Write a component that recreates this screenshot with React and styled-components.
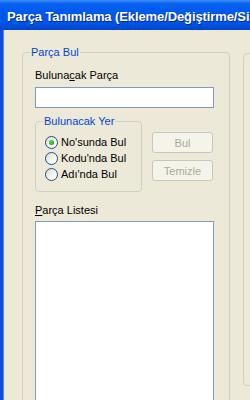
import React from 'react';
import styled, { createGlobalStyle } from 'styled-components';

const GlobalStyle = createGlobalStyle`
  html, body {
    margin: 0;
    padding: 0;
    background: #ece9d8;
    overflow: hidden;
  }
  body {
    font-family: "Liberation Sans", Arial, sans-serif;
    font-size: 11px;
    color: #000;
  }
`;

const Window = styled.div`
  width: 250px;
  height: 400px;
  display: flex;
  flex-direction: column;
  overflow: hidden;
`;

const TitleBar = styled.div`
  height: 30px;
  flex: none;
  display: flex;
  align-items: center;
  padding: 2px 0 0 7px;
  box-sizing: border-box;
  background: linear-gradient(
    to bottom,
    #3d8ffb 0%,
    #0a63f0 12%,
    #005aee 35%,
    #0056e6 70%,
    #004fdc 88%,
    #0042c4 100%
  );
  color: #fff;
  font-family: "Liberation Sans", Arial, sans-serif;
  font-weight: bold;
  font-size: 13px;
  letter-spacing: -0.1px;
  white-space: nowrap;
  text-shadow: 1px 1px 0 #0b2a8c;
`;

const Client = styled.div`
  flex: 1;
  display: flex;
  align-items: flex-start;
  gap: 13px;
  padding: 22px 0 0 19px;
  border-left: 3px solid #0c4fe0;
  box-shadow: inset 1px 0 0 #4f87ee;
  overflow: hidden;
`;

const GroupBox = styled.div`
  position: relative;
  flex: none;
  box-sizing: border-box;
  width: ${(p) => p.$w}px;
  height: ${(p) => p.$h}px;
  margin-top: ${(p) => p.$top || 0}px;
  padding: ${(p) => p.$pad || '0'};
  border: 1px solid #d0d0bf;
  border-radius: 4px;
`;

const GroupTitle = styled.span`
  position: absolute;
  top: -7px;
  left: 7px;
  padding: 0 1px;
  line-height: 13px;
  background: #ece9d8;
  color: #0046d5;
  white-space: nowrap;
`;

const FieldLabel = styled.label`
  display: block;
  line-height: 13px;
  margin-top: ${(p) => p.$top || 0}px;
  u {
    text-decoration: underline;
  }
`;

const TextInput = styled.div`
  box-sizing: border-box;
  width: 179px;
  height: 21px;
  margin-top: 5px;
  background: #fff;
  border: 1px solid #7f9db9;
`;

const SearchRow = styled.div`
  display: flex;
  align-items: flex-start;
  gap: 10px;
  margin-top: 13px;
`;

const RadioRow = styled.div`
  display: flex;
  align-items: center;
  gap: 3px;
  height: 16px;
  line-height: 13px;
`;

const RadioCircle = styled.span`
  position: relative;
  flex: none;
  box-sizing: border-box;
  width: 13px;
  height: 13px;
  border-radius: 50%;
  border: 1px solid #1c5180;
  background: linear-gradient(135deg, #dcdcd5 0%, #f4f4f0 55%, #ffffff 100%);

  &::after {
    content: '';
    display: ${(p) => (p.$checked ? 'block' : 'none')};
    position: absolute;
    left: 3px;
    top: 3px;
    width: 5px;
    height: 5px;
    border-radius: 50%;
    background: radial-gradient(circle at 40% 40%, #5fe05a 0%, #21a121 70%, #1b8a1b 100%);
  }
`;

const ButtonColumn = styled.div`
  display: flex;
  flex-direction: column;
  gap: 7px;
  margin-top: 11px;
`;

const Button = styled.button`
  box-sizing: border-box;
  width: 61px;
  height: 21px;
  padding: 0;
  border: 1px solid #c9c7ba;
  border-radius: 3px;
  background: #f5f4ea;
  color: #aca899;
  font-family: inherit;
  font-size: 11px;
`;

const ListBox = styled.div`
  box-sizing: border-box;
  width: 179px;
  height: 220px;
  margin-top: 4px;
  background: #fff;
  border: 1px solid #7f9db9;
`;

const radios = [
  { label: "No'sunda Bul", checked: true },
  { label: "Kodu'nda Bul", checked: false },
  { label: "Adı'nda Bul", checked: false },
];

export default function App() {
  return (
    <>
      <GlobalStyle />
      <Window>
        <TitleBar>Parça Tanımlama (Ekleme/Değiştirme/Silme)</TitleBar>
        <Client>
          <GroupBox $w={208} $h={420} $pad="16px 15px 0 12px">
            <GroupTitle>Parça Bul</GroupTitle>
            <FieldLabel>
              Buluna<u>c</u>ak Parça
            </FieldLabel>
            <TextInput />
            <SearchRow>
              <GroupBox $w={107} $h={71} $pad="12px 0 0 9px">
                <GroupTitle>Bulunacak Yer</GroupTitle>
                {radios.map((r) => (
                  <RadioRow key={r.label}>
                    <RadioCircle $checked={r.checked} />
                    {r.label}
                  </RadioRow>
                ))}
              </GroupBox>
              <ButtonColumn>
                <Button disabled>Bul</Button>
                <Button disabled>Temizle</Button>
              </ButtonColumn>
            </SearchRow>
            <FieldLabel $top={12}>
              <u>P</u>arça Listesi
            </FieldLabel>
            <ListBox />
          </GroupBox>
          <GroupBox $w={60} $h={333} $top={1} />
        </Client>
      </Window>
    </>
  );
}
